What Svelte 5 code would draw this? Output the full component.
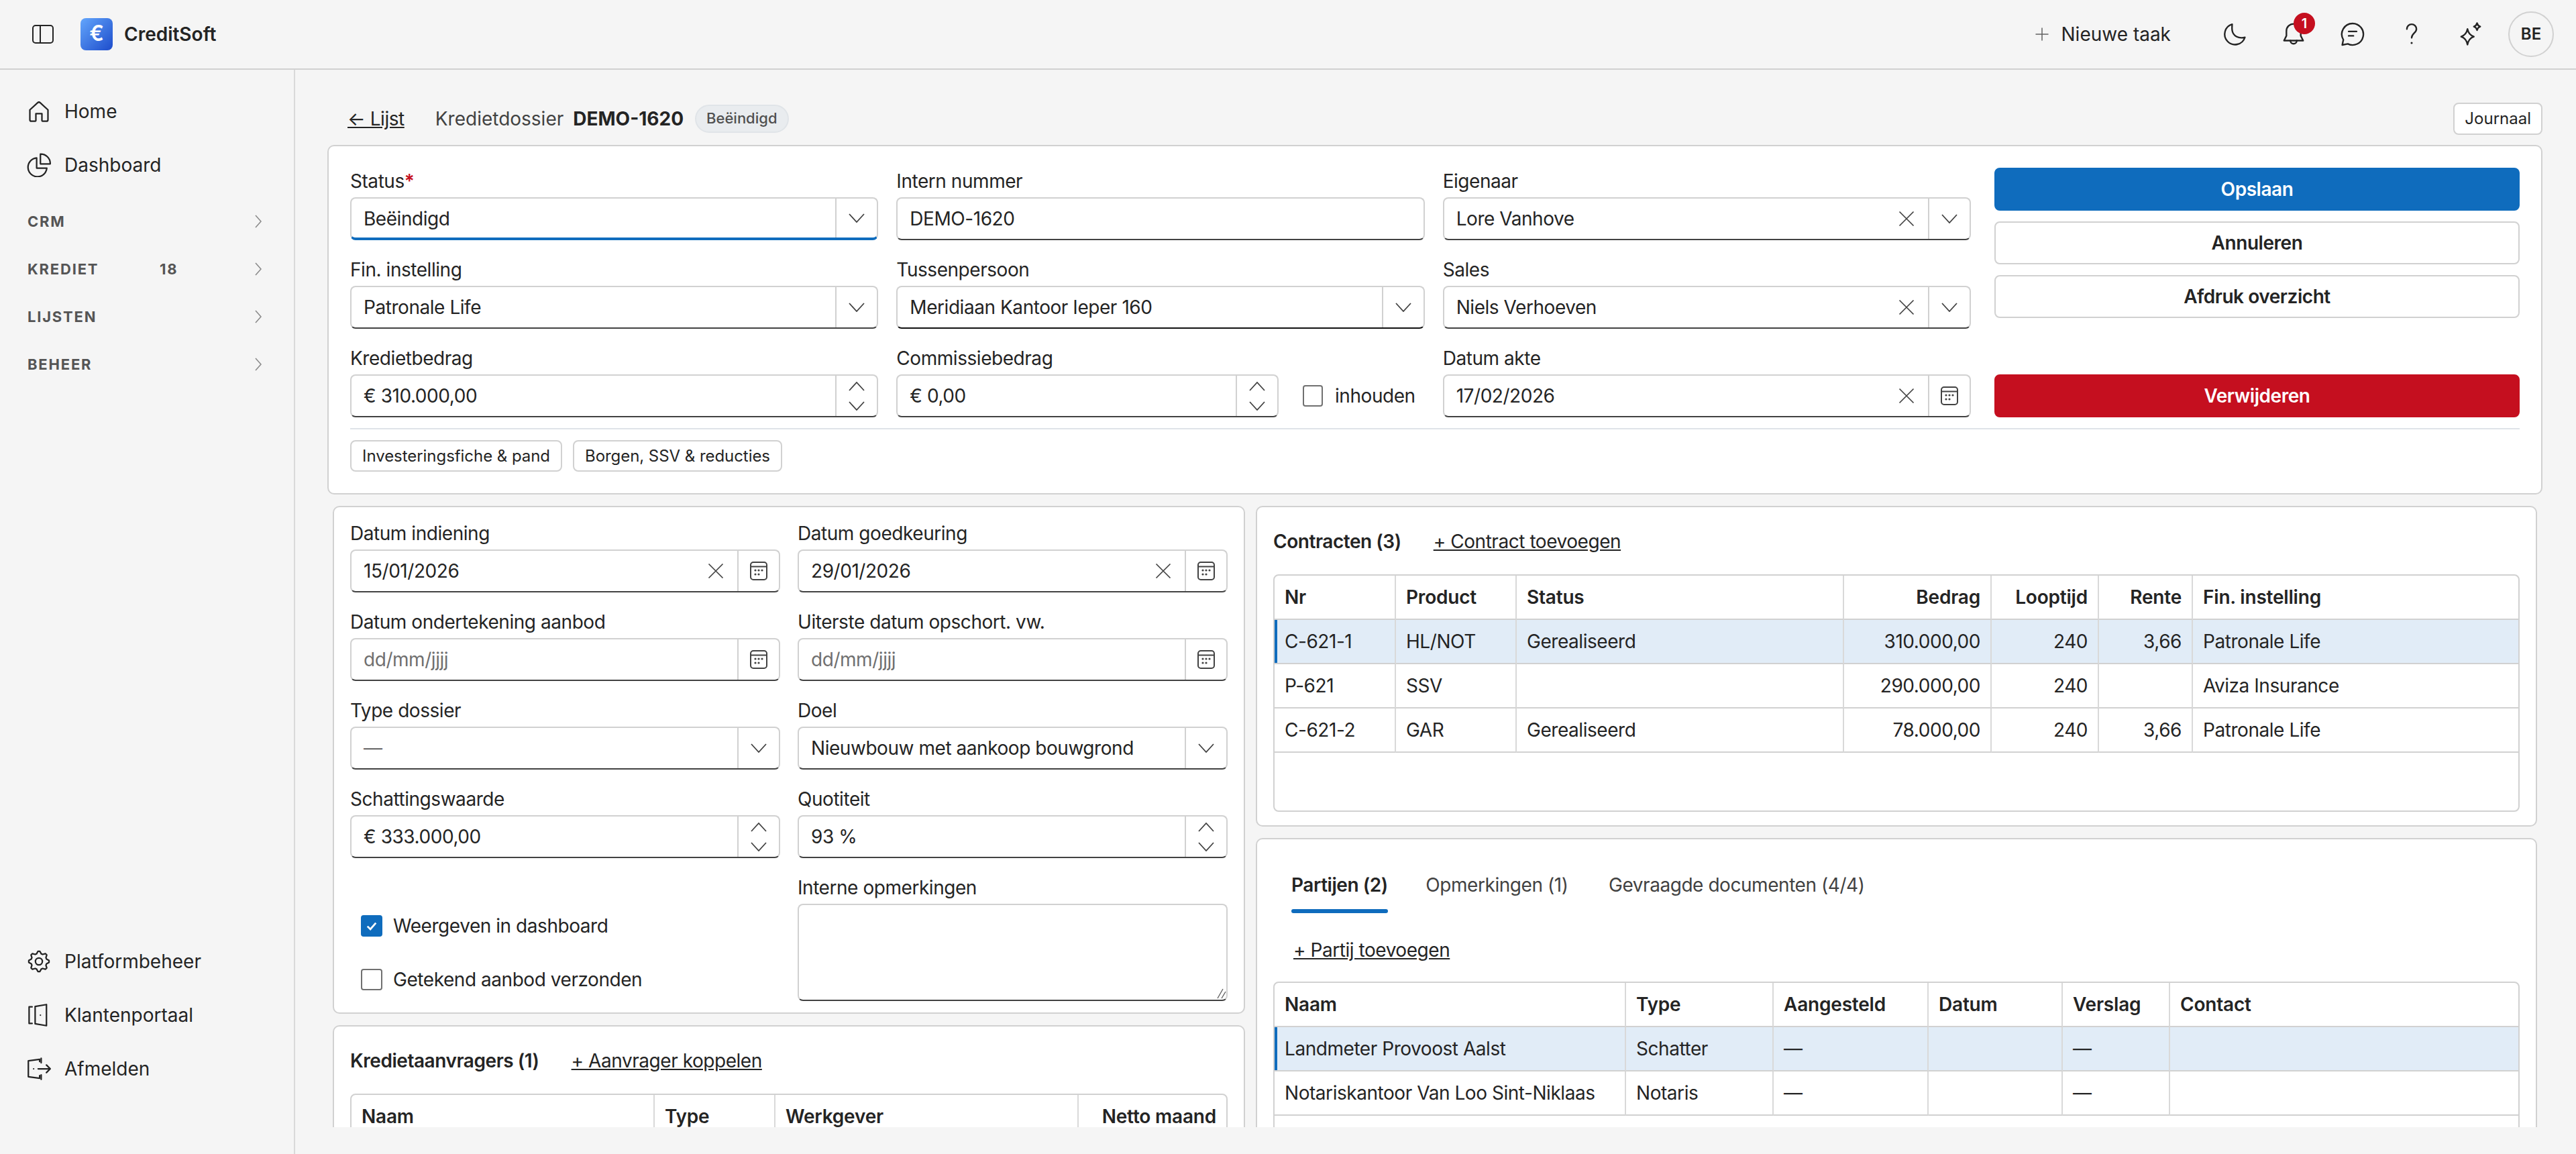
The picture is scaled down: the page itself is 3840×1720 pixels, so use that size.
<script>
  // Kredietdossier detail: sidebar, top bar, form cards and two tables.
  const navTop = [
    { id: 'home', label: 'Home' },
    { id: 'pie', label: 'Dashboard' }
  ];
  const groups = [
    { label: 'CRM' },
    { label: 'KREDIET', count: 18 },
    { label: 'LIJSTEN' },
    { label: 'BEHEER' }
  ];
  const navBottom = [
    { id: 'gear', label: 'Platformbeheer' },
    { id: 'door', label: 'Klantenportaal' },
    { id: 'exit', label: 'Afmelden' }
  ];

  const headFields = [
    { label: 'Status', req: true, value: 'Beëindigd', btn: 'down', cls: 'focus' },
    { label: 'Intern nummer', value: 'DEMO-1620' },
    { label: 'Eigenaar', value: 'Lore Vanhove', clear: true, btn: 'down' },
    { label: 'Fin. instelling', value: 'Patronale Life', btn: 'down' },
    { label: 'Tussenpersoon', value: 'Meridiaan Kantoor Ieper 160', btn: 'down', cls: 'hover' },
    { label: 'Sales', value: 'Niels Verhoeven', clear: true, btn: 'down' },
    { label: 'Kredietbedrag', value: '€ 310.000,00', btn: 'spin' },
    { label: 'Commissiebedrag', value: '€ 0,00', btn: 'spin', inhouden: true },
    { label: 'Datum akte', value: '17/02/2026', clear: true, btn: 'cal' }
  ];
  const detailFields = [
    { label: 'Datum indiening', value: '15/01/2026', clear: true, btn: 'cal' },
    { label: 'Datum goedkeuring', value: '29/01/2026', clear: true, btn: 'cal' },
    { label: 'Datum ondertekening aanbod', ph: 'dd/mm/jjjj', btn: 'cal' },
    { label: 'Uiterste datum opschort. vw.', ph: 'dd/mm/jjjj', btn: 'cal' },
    { label: 'Type dossier', ph: '—', btn: 'down' },
    { label: 'Doel', value: 'Nieuwbouw met aankoop bouwgrond', btn: 'down' },
    { label: 'Schattingswaarde', value: '€ 333.000,00', btn: 'spin' },
    { label: 'Quotiteit', value: '93 %', btn: 'spin' }
  ];

  const contractCols = [
    { t: 'Nr', w: 181 }, { t: 'Product', w: 180 }, { t: 'Status', w: 488 },
    { t: 'Bedrag', w: 220, r: true }, { t: 'Looptijd', w: 160, r: true },
    { t: 'Rente', w: 140, r: true }, { t: 'Fin. instelling' }
  ];
  const contractRows = [
    ['C-621-1', 'HL/NOT', 'Gerealiseerd', '310.000,00', '240', '3,66', 'Patronale Life'],
    ['P-621', 'SSV', '', '290.000,00', '240', '', 'Aviza Insurance'],
    ['C-621-2', 'GAR', 'Gerealiseerd', '78.000,00', '240', '3,66', 'Patronale Life']
  ];
  const partyCols = [
    { t: 'Naam', w: 524 }, { t: 'Type', w: 220 }, { t: 'Aangesteld', w: 231 },
    { t: 'Datum', w: 200 }, { t: 'Verslag', w: 160 }, { t: 'Contact' }
  ];
  const partyRows = [
    ['Landmeter Provoost Aalst', 'Schatter', '—', '', '—', ''],
    ['Notariskantoor Van Loo Sint-Niklaas', 'Notaris', '—', '', '—', '']
  ];
  const applicantCols = [
    { t: 'Naam', w: 452 }, { t: 'Type', w: 180 }, { t: 'Werkgever', w: 452 },
    { t: 'Netto maand', r: true }
  ];

  // gear outline, 8 teeth
  const gear = Array.from({ length: 32 }, (_, i) => {
    const a = ((i - 0.5) / 32) * Math.PI * 2;
    const r = i % 4 === 0 || i % 4 === 1 ? 13.5 : 10.6;
    return `${i ? 'L' : 'M'}${(16 + r * Math.cos(a)).toFixed(1)} ${(16 + r * Math.sin(a)).toFixed(1)}`;
  }).join(' ') + ' Z';
</script>

{#snippet icon(id)}
  <svg class="ico" viewBox="0 0 32 32" fill="none" stroke="currentColor" stroke-width="2" stroke-linejoin="round" stroke-linecap="round">
    {#if id === 'home'}
      <path d="M4 14 14.3 4.6a2.5 2.5 0 0 1 3.4 0L28 14v13a2 2 0 0 1-2 2h-5a1 1 0 0 1-1-1v-9h-8v9a1 1 0 0 1-1 1H6a2 2 0 0 1-2-2Z" />
    {:else if id === 'pie'}
      <path d="M13 6.5a12.5 12.5 0 1 0 13.5 13.5H13Z" />
      <path d="M18 1.5a12.5 12.5 0 0 1 13 13H18Z" />
    {:else if id === 'gear'}
      <path d={gear} />
      <circle cx="16" cy="16" r="4.6" />
    {:else if id === 'door'}
      <path d="M7 5H3v22h4" />
      <path d="M11 4.5 26 2v28l-15-2.5Z" />
      <circle cx="18" cy="16" r="1" fill="currentColor" stroke="none" />
    {:else if id === 'exit'}
      <path d="M17 6.5V3.5L2 5.5v21l15 2v-3.500" />
      <circle cx="9" cy="16" r="1" fill="currentColor" stroke="none" />
      <path d="M19 2v6M19 24v6M15 16h16M26 11l5 5-5 5" />
    {:else if id === 'panel'}
      <rect x="1" y="3" width="30" height="26" rx="4" />
      <path d="M12 3v26" />
    {:else if id === 'plus'}
      <path d="M16 4v24M4 16h24" />
    {:else if id === 'moon'}
      <path d="M13 3.500a13 13 0 1 0 16 16.500c-8 2-15-2-16-9-.5-3 0-5.500 0-7.500Z" />
    {:else if id === 'bell'}
      <path d="M16 3a9 9 0 0 0-9 9v6l-3 6h24l-3-6v-6a9 9 0 0 0-9-9Z" />
      <path d="M12 24a4 4 0 0 0 8 0" />
    {:else if id === 'chat'}
      <path d="M16 2.500a13.500 13.500 0 1 1-6 25.600L3 29.500l1.400-6.500A13.500 13.500 0 0 1 16 2.500Z" />
      <path d="M11 12.500h10M11 18h6" />
    {:else if id === 'help'}
      <path d="M10 9.500c0-3.500 2.800-6 6-6s6 2.500 6 6c0 5-6 5.500-6 11" />
      <circle cx="16" cy="27" r="1.300" fill="currentColor" stroke="none" />
    {:else if id === 'spark'}
      <path d="M12 9.500c1 5 3.500 8 8 9.500-4.500 1.500-7 4.500-8 10-1-5.500-3.500-8.500-8-10 4.500-1.500 7-4.500 8-9.500Z" />
      <path d="M24 2c.6 2.500 1.800 3.800 4 4.500-2.200.7-3.400 2-4 4.500-.6-2.500-1.800-3.800-4-4.500 2.200-.7 3.400-2 4-4.500Z" />
    {/if}
  </svg>
{/snippet}

{#snippet chevron(up)}
  <svg class="chev" viewBox="0 0 24 14" fill="none" stroke="currentColor" stroke-width="1.800">
    <path d={up ? 'M1 13 12 1l11 12' : 'M1 1l11 12L23 1'} />
  </svg>
{/snippet}

{#snippet calendar()}
  <svg class="cal" viewBox="0 0 26 28" fill="none" stroke="currentColor" stroke-width="2">
    <rect x="1" y="1" width="24" height="26" rx="4" />
    <path d="M1 7.500h24" />
    <g fill="currentColor" stroke="none">
      <circle cx="8" cy="13" r="1.600" /><circle cx="13" cy="13" r="1.600" /><circle cx="18" cy="13" r="1.600" />
      <circle cx="8" cy="19" r="1.600" /><circle cx="13" cy="19" r="1.600" />
    </g>
  </svg>
{/snippet}

{#snippet field(f)}
  <div class="field">
    <div class="lbl">{f.label}{#if f.req}<span class="req">*</span>{/if}</div>
    <div class="inrow">
      <div class="inp {f.cls ?? ''}">
        <span class="val" class:ph={f.ph}>{f.value ?? f.ph}</span>
        {#if f.clear}
          <span class="clear">
            <svg viewBox="0 0 24 24" fill="none" stroke="currentColor" stroke-width="1.700"><path d="M1.500 1.500l21 21M22.500 1.500l-21 21" /></svg>
          </span>
        {/if}
        {#if f.btn}
          <span class="addon" class:spin={f.btn === 'spin'}>
            {#if f.btn === 'down'}
              {@render chevron(false)}
            {:else if f.btn === 'cal'}
              {@render calendar()}
            {:else}
              {@render chevron(true)}
              {@render chevron(false)}
            {/if}
          </span>
        {/if}
      </div>
      {#if f.inhouden}
        <span class="check small"><span class="box"></span>inhouden</span>
      {/if}
    </div>
  </div>
{/snippet}

{#snippet grid(cols, rows, selected, h)}
  <div class="tbl" style="height:{h}px">
    <table>
      <colgroup>
        {#each cols as c}<col style={c.w ? `width:${c.w}px` : ''} />{/each}
      </colgroup>
      <thead>
        <tr>{#each cols as c}<th class:r={c.r}>{c.t}</th>{/each}</tr>
      </thead>
      <tbody>
        {#each rows as row, i}
          <tr class:sel={i === selected}>
            {#each row as cell, j}<td class:r={cols[j].r}>{cell}</td>{/each}
          </tr>
        {/each}
      </tbody>
    </table>
  </div>
{/snippet}

<div class="app">
  <header class="top">
    <span class="toggle">{@render icon('panel')}</span>
    <span class="logo">€</span>
    <span class="brand">CreditSoft</span>
    <div class="right">
      <button class="newtask"><span class="plus">{@render icon('plus')}</span>Nieuwe taak</button>
      <button class="ib">{@render icon('moon')}</button>
      <button class="ib">{@render icon('bell')}<span class="badge">1</span></button>
      <button class="ib">{@render icon('chat')}</button>
      <button class="ib">{@render icon('help')}</button>
      <button class="ib">{@render icon('spark')}</button>
      <span class="avatar">BE</span>
    </div>
  </header>

  <aside class="side">
    <div>
      {#each navTop as n}
        <div class="nav">{@render icon(n.id)}<span>{n.label}</span></div>
      {/each}
      <div class="groups">
        {#each groups as g}
          <div class="group">
            <span class="gname">{g.label}</span>
            {#if g.count}<span class="gcount">{g.count}</span>{/if}
            <svg class="gchev" viewBox="0 0 10 20" fill="none" stroke="currentColor" stroke-width="1.600"><path d="M1 1l8 9-8 9" /></svg>
          </div>
        {/each}
      </div>
    </div>
    <div>
      {#each navBottom as n}
        <div class="nav">{@render icon(n.id)}<span>{n.label}</span></div>
      {/each}
    </div>
  </aside>

  <main class="main">
    <div class="scroll">
      <div class="crumbs">
        <span class="back">← Lijst</span>
        <span class="kind">Kredietdossier</span>
        <strong class="code">DEMO-1620</strong>
        <span class="state">Beëindigd</span>
        <button class="journal">Journaal</button>
      </div>

      <section class="card head">
        <div class="headgrid">
          <div class="fields3">
            {#each headFields as f}{@render field(f)}{/each}
          </div>
          <div class="actions">
            <button class="btn primary">Opslaan</button>
            <button class="btn">Annuleren</button>
            <button class="btn">Afdruk overzicht</button>
            <button class="btn danger">Verwijderen</button>
          </div>
        </div>
        <div class="chips">
          <button class="chip">Investeringsfiche &amp; pand</button>
          <button class="chip">Borgen, SSV &amp; reducties</button>
        </div>
      </section>

      <div class="cols">
        <div class="col">
          <section class="card details">
            <div class="fields2">
              {#each detailFields as f}{@render field(f)}{/each}
              <div class="checks">
                <span class="check">
                  <span class="box on">
                    <svg viewBox="0 0 16 16" fill="none" stroke="#fff" stroke-width="2.200"><path d="M3 8.500 6.500 12 13 4.500" /></svg>
                  </span>Weergeven in dashboard
                </span>
                <span class="check"><span class="box"></span>Getekend aanbod verzonden</span>
              </div>
              <div class="field">
                <div class="lbl">Interne opmerkingen</div>
                <div class="area">
                  <svg class="grip" viewBox="0 0 14 16" fill="none" stroke="#616161" stroke-width="1.400"><path d="M1 15 9 1M7 15l6-10" /></svg>
                </div>
              </div>
            </div>
          </section>
          <section class="card list">
            <div class="listhead"><span>Kredietaanvragers (1)</span><span class="add">+ Aanvrager koppelen</span></div>
            {@render grid(applicantCols, [], -1, 200)}
          </section>
        </div>

        <div class="col">
          <section class="card list contracts">
            <div class="listhead"><span>Contracten (3)</span><span class="add">+ Contract toevoegen</span></div>
            {@render grid(contractCols, contractRows, 0, 354)}
          </section>
          <section class="card parties">
            <div class="tabs">
              <span class="tab on" data-t="Partijen (2)">Partijen (2)</span>
              <span class="tab" data-t="Opmerkingen (1)">Opmerkingen (1)</span>
              <span class="tab" data-t="Gevraagde documenten (4/4)">Gevraagde documenten (4/4)</span>
            </div>
            <div class="addrow"><span class="add">+ Partij toevoegen</span></div>
            {@render grid(partyCols, partyRows, 0, 400)}
          </section>
        </div>
      </div>
    </div>
  </main>
</div>

<style>
  :global(body) { margin: 0; background: #f5f5f5; }
  .app {
    width: 3840px; height: 1720px; display: grid;
    grid-template-columns: 440px 1fr; grid-template-rows: 104px 1fr;
    font-family: Inter, "Liberation Sans", sans-serif; font-size: 28px; line-height: 40px; letter-spacing: -0.45px;
    color: #242424; background: #f5f5f5; overflow: hidden;
  }
  button { font: inherit; letter-spacing: inherit; color: inherit; background: none; border: 0; padding: 0; }
  .ico { width: 32px; height: 32px; display: block; flex: none; }

  .top {
    grid-column: 1 / -1; display: flex; align-items: center; padding-left: 48px;
    border-bottom: 2px solid #d1d1d1; box-sizing: border-box; letter-spacing: 0;
  }
  .toggle { margin-right: 40px; }
  .logo {
    width: 48px; height: 48px; border-radius: 8px; margin-right: 17px;
    background: linear-gradient(135deg, #63a6fc, #1d4ccb); color: #fff;
    font-weight: 600; font-size: 32px; line-height: 46px; text-align: center;
  }
  .brand { font-weight: 600; }
  .right { margin-left: auto; display: flex; align-items: center; padding-right: 33px; }
  .newtask { display: flex; align-items: center; gap: 17px; margin-right: 51px; }
  .plus { width: 24px; height: 24px; color: #616161; }
  .plus .ico { width: 24px; height: 24px; }
  .ib { width: 88px; height: 68px; display: flex; align-items: center; justify-content: center; position: relative; }
  .ib .ico { width: 38px; height: 38px; }
  .badge {
    position: absolute; left: 44px; top: 2px; width: 32px; height: 32px; border-radius: 50%;
    background: #c50f1f; color: #fff; font-size: 20px; font-weight: 600; line-height: 32px; text-align: center;
  }
  .avatar {
    width: 68px; height: 68px; box-sizing: border-box; margin-left: 12px; border-radius: 50%;
    border: 2px solid #d1d1d1; font-size: 24px; font-weight: 600; line-height: 64px; text-align: center;
  }

  .side {
    border-right: 2px solid #d9d9d9; display: flex; flex-direction: column; justify-content: space-between;
    padding: 22px 0 87px; box-sizing: border-box;
  }
  .nav { height: 80px; display: flex; align-items: center; gap: 20px; padding-left: 40px; letter-spacing: 0; }
  .nav .ico { width: 36px; height: 36px; }
  .groups { margin-top: 8px; }
  .group {
    height: 71px; display: flex; align-items: center; padding-left: 41px; position: relative;
    font-size: 22px; font-weight: 700; letter-spacing: 1.800px; color: #555;
  }
  .gname { width: 197px; }
  .gchev { position: absolute; left: 380px; width: 10px; height: 20px; color: #8a8a8a; }

  .main { padding: 49px 50px 40px 48px; min-width: 0; }
  .scroll { height: 1527px; overflow: hidden; }
  .crumbs { height: 48px; margin-bottom: 15px; display: flex; align-items: center; }
  .back { margin-left: 30px; text-decoration: underline; }
  .kind { margin-left: 46px; color: #424242; letter-spacing: 0; }
  .code { margin-left: 14px; font-weight: 700; letter-spacing: 0; }
  .state {
    margin-left: 17px; height: 42px; box-sizing: border-box; padding: 0 15px; border-radius: 21px;
    border: 2px solid #e0e4e8; background: #e9ecef; color: #505050; font-size: 22px; font-weight: 500; line-height: 36px;
    letter-spacing: 0;
  }
  .journal {
    margin-left: auto; height: 48px; padding: 0 15px; font-size: 24px; background: #fff; letter-spacing: 0;
    border: 2px solid #d1d1d1; border-radius: 8px;
  }

  .card { background: #fff; border: 2px solid #d1d1d1; border-radius: 10px; box-sizing: border-box; }
  .head { padding: 32px; }
  .headgrid { display: flex; gap: 35px; }
  .fields3 { flex: 1; display: grid; grid-template-columns: repeat(3, 1fr); gap: 24px 27px; min-width: 0; }
  .actions { width: 783px; flex: none; display: flex; flex-direction: column; gap: 16px; }
  .btn {
    height: 64px; box-sizing: border-box; border: 2px solid #d1d1d1; border-radius: 8px; background: #fff;
    font-weight: 600;
  }
  .primary { background: #0f6cbd; border-color: #0f6cbd; color: #fff; }
  .danger { background: #c50f1f; border-color: #c50f1f; color: #fff; margin-top: auto; }

  .lbl { height: 40px; margin-bottom: 4px; white-space: nowrap; }
  .req { color: #c50f1f; font-weight: 600; }
  .inrow { display: flex; align-items: center; }
  .inp {
    flex: 1; min-width: 0; height: 64px; box-sizing: border-box; display: flex; align-items: stretch;
    border: 2px solid #d1d1d1; border-bottom-color: #424242; border-radius: 8px; background: #fff;
  }
  .inp.focus { border-bottom: 4px solid #0f6cbd; }
  .inp.hover { border-bottom-color: #111; }
  .val { flex: 1; padding-left: 18px; line-height: 60px; white-space: nowrap; }
  .ph { color: #707070; }
  .clear { width: 64px; display: flex; align-items: center; justify-content: center; color: #424242; }
  .clear svg { width: 24px; height: 24px; }
  .addon {
    width: 60px; flex: none; border-left: 2px solid #d1d1d1; display: flex; align-items: center; justify-content: center;
    color: #424242;
  }
  .addon.spin { flex-direction: column; gap: 15px; }
  .chev { width: 24px; height: 14px; }
  .cal { width: 26px; height: 28px; }
  .check { display: flex; align-items: center; gap: 16px; white-space: nowrap; }
  .box {
    width: 32px; height: 32px; box-sizing: border-box; border: 2px solid #707070; border-radius: 4px; flex: none;
  }
  .box.on { background: #0f6cbd; border-color: #0f6cbd; display: flex; align-items: center; justify-content: center; }
  .box.on svg { width: 20px; height: 20px; }
  .check.small { margin-left: 36px; margin-right: 14px; gap: 18px; }
  .check.small .box { width: 30px; }

  .chips { margin-top: 16px; padding-top: 16px; border-top: 2px solid #dfe3e8; display: flex; gap: 16px; }
  .chip {
    height: 47px; padding: 0 16px; box-sizing: border-box; background: #fff; font-size: 24px; letter-spacing: -0.05px;
    border: 2px solid #d1d1d1; border-radius: 8px;
  }

  .cols { margin: 17px 8px 0; display: grid; grid-template-columns: 1360px 1fr; gap: 16px; }
  .col { display: flex; flex-direction: column; gap: 17px; min-width: 0; }
  .details { padding: 19px 24px 17px; }
  .fields2 { display: grid; grid-template-columns: repeat(2, 1fr); gap: 24px 26px; }
  .checks { display: flex; flex-direction: column; gap: 40px; padding: 57px 0 0 16px; }
  .area { height: 145px; box-sizing: border-box; border: 2px solid #d1d1d1; border-bottom-color: #424242; border-radius: 8px; position: relative; }
  .grip { position: absolute; right: 0; bottom: 1px; width: 14px; height: 16px; }

  .list { padding: 31px 24px 20px; }
  .listhead { height: 40px; margin-bottom: 29px; display: flex; gap: 48px; font-weight: 600; }
  .add { font-weight: 400; text-decoration: underline; }
  .parties { padding: 48px 24px 20px; }
  .tabs { display: flex; gap: 54px; padding-left: 27px; }
  .tab { display: block; padding-bottom: 22px; color: #424242; text-align: center; white-space: nowrap; position: relative; }
  .tab::after { content: attr(data-t); display: block; height: 0; overflow: hidden; visibility: hidden; font-weight: 600; }
  .tab.on { color: #242424; font-weight: 600; }
  .tab.on::before {
    content: ''; position: absolute; left: 0; right: 0; bottom: 0; height: 6px; border-radius: 3px; background: #0f6cbd;
  }
  .addrow { margin: 35px 0 27px 30px; height: 40px; }

  .tbl { border: 2px solid #d1d1d1; border-radius: 8px; box-sizing: border-box; overflow: hidden; background: #fff; }
  table { width: 100%; table-layout: fixed; border-collapse: separate; border-spacing: 0; }
  th, td {
    height: 66px; box-sizing: border-box; padding: 0 15px; text-align: left; white-space: nowrap;
    border-bottom: 2px solid #d1d1d1; border-right: 2px solid #d9d9d9;
  }
  th { font-weight: 600; letter-spacing: -0.2px; }
  th:last-child, td:last-child { border-right: 0; }
  th.r, td.r { text-align: right; }
  .sel td { background: #e1ecf7; }
  .sel td:first-child { box-shadow: inset 4px 0 0 #0f6cbd; }
</style>
